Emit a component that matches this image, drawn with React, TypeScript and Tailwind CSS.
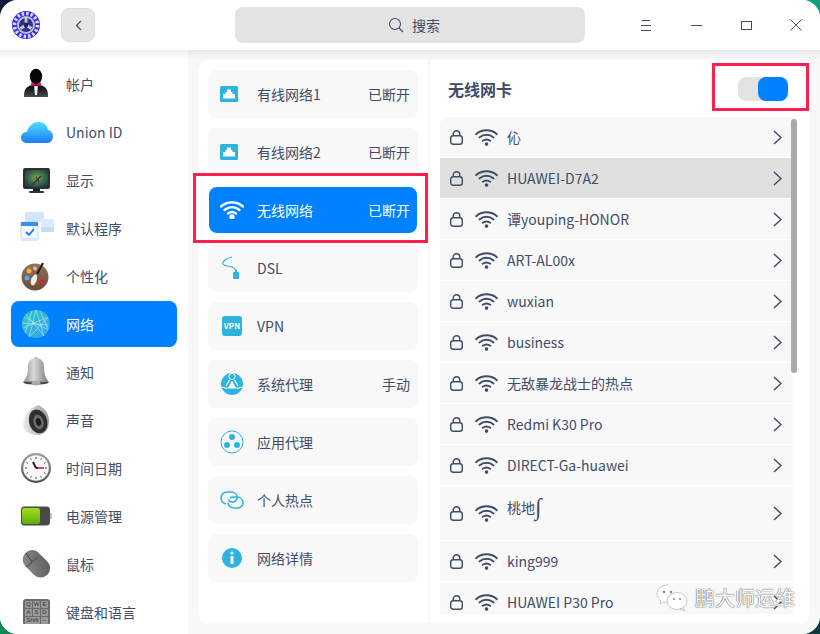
import React from "react";

const Svg = ({ children, w = 32, h = 32, className = "" }: { children: React.ReactNode; w?: number; h?: number; className?: string }) => (
  <svg width={w} height={h} viewBox={`0 0 ${w} ${h}`} fill="none" className={`shrink-0 ${className}`}>
    {children}
  </svg>
);

const Logo = () => (
  <Svg w={30} h={30}>
    <circle cx="15" cy="15" r="14" fill="#3a2be6" />
    <circle cx="15" cy="15" r="11.500" stroke="#dcdcf4" strokeWidth="3.500" strokeDasharray="2.400 2.100" />
    <circle cx="15" cy="15" r="9" fill="#bfc1d2" />
    <circle cx="15" cy="15" r="7" fill="#2c3184" />
    <path d="M15 14V8M15 15l-5.500 3.500M15 15l5.500 3.500" stroke="#c8cad8" strokeWidth="2.800" />
    <circle cx="15" cy="15" r="2.400" fill="#1d2060" />
  </Svg>
);

const Account = () => (
  <Svg>
    <defs>
      <linearGradient id="suit" x1="0" y1="0" x2="0" y2="1">
        <stop offset="0" stopColor="#000" />
        <stop offset="1" stopColor="#4a4a4a" />
      </linearGradient>
    </defs>
    <ellipse cx="16" cy="8.500" rx="6.200" ry="7.800" fill="#060606" />
    <path d="M4 29c0-5 .5-8 3.500-10l5.500-3h6l5.500 3c3 2 3.500 5 3.500 10z" fill="url(#suit)" />
    <path d="M14 18h4l-1 9h-2z" fill="#f0f0f0" />
    <path d="M11 14.500l5 1.800 5-1.800v4l-5-1.500-5 1.500z" fill="#d0145e" />
  </Svg>
);

const Cloud = () => (
  <Svg w={34} h={32}>
    <defs>
      <linearGradient id="cloud" x1="0" y1="0" x2="0" y2="1">
        <stop offset="0" stopColor="#4fdcff" />
        <stop offset="1" stopColor="#1c7cf6" />
      </linearGradient>
    </defs>
    <path d="M7 27c-3.500 0-6-2.500-6-5.500s2.400-5.300 5.500-5.400C8.500 11 12.500 6 18.500 6c5.500 0 8.500 3.500 9.500 8 3.200.6 5 3.500 5 6.500 0 3.800-2.800 6.500-6 6.500z" fill="url(#cloud)" />
  </Svg>
);

const Display = () => (
  <Svg>
    <defs>
      <radialGradient id="scr" cx="0.500" cy="0.450" r="0.700">
        <stop offset="0" stopColor="#7ea52c" />
        <stop offset="0.600" stopColor="#30604f" />
        <stop offset="1" stopColor="#18303a" />
      </radialGradient>
    </defs>
    <rect x="3" y="4" width="27" height="21" rx="2" fill="#2f2f31" />
    <rect x="5" y="6" width="23" height="17" fill="url(#scr)" />
    <path d="M12 21l9-9M16 13l3 5" stroke="#3b2a4a" strokeWidth="1.300" />
    <path d="M13 25h7v2h-7z" fill="#1d1d1d" />
    <rect x="9" y="27" width="15" height="2" rx="1" fill="#333" />
  </Svg>
);

const Apps = () => (
  <Svg w={34} h={32}>
    <rect x="5" y="0" width="19" height="10" rx="2" fill="#d2e5fd" />
    <rect x="21" y="7" width="13" height="13" rx="1.500" fill="#dcebfd" />
    <rect x="21" y="15" width="13" height="5" fill="#c6dcf8" />
    <rect x="1" y="10" width="17" height="17" rx="1.500" fill="#f2f7fe" stroke="#bcd8fb" />
    <rect x="1" y="10" width="17" height="4" fill="#3c8ff0" />
    <path d="M6 20l3 3 5-6" stroke="#1a7cf0" strokeWidth="1.800" />
    <rect x="1" y="27" width="17" height="2" fill="#d9e9fc" />
  </Svg>
);

const Palette = () => (
  <Svg>
    <defs>
      <linearGradient id="pal" x1="0" y1="0" x2="0" y2="1">
        <stop offset="0" stopColor="#91735b" />
        <stop offset="1" stopColor="#6b4c3a" />
      </linearGradient>
    </defs>
    <circle cx="15" cy="17" r="13.500" fill="url(#pal)" />
    <circle cx="9" cy="11" r="2.500" fill="#f2b13a" />
    <circle cx="15" cy="8.500" r="2" fill="#d8b8a8" />
    <circle cx="7" cy="18" r="2.500" fill="#5aa7ea" />
    <circle cx="22" cy="22" r="2.500" fill="#d81f3c" />
    <path d="M11 24c-1-4 1-8 5-10 2 3 1 8-2 11-1 .6-2.500.4-3-1z" fill="#f4efe8" />
    <path d="M17 14l6-11" stroke="#1c1c1c" strokeWidth="2" />
  </Svg>
);

const Globe = () => (
  <Svg>
    <defs>
      <linearGradient id="glb" x1="0" y1="0" x2="1" y2="1">
        <stop offset="0" stopColor="#2dc9c0" />
        <stop offset="1" stopColor="#3a9ff0" />
      </linearGradient>
    </defs>
    <circle cx="16" cy="16" r="14" fill="url(#glb)" />
    <path d="M16 2l-7 27M16 2l8 26M4 9l24 13M3 20L28 9M9 29l19-19M6 6l18 22M2 15l26 2M12 3L5 25M20 3l8 18" stroke="#dff6fb" strokeWidth="0.600" opacity="0.800" />
  </Svg>
);

const Bell = () => (
  <Svg>
    <defs>
      <linearGradient id="bel" x1="0" y1="0" x2="1" y2="0">
        <stop offset="0" stopColor="#8d8d8d" />
        <stop offset="0.400" stopColor="#d9d9d9" />
        <stop offset="1" stopColor="#7c7c7c" />
      </linearGradient>
    </defs>
    <circle cx="16" cy="3" r="1.800" fill="#888" />
    <path d="M16 2c-5.500 0-8 4-8 9 0 6-1 10-4.500 14.500h25C25 21 24 17 24 11c0-5-2.500-9-8-9z" fill="url(#bel)" />
    <path d="M3.500 25.500h25v1.500c-4 2-21 2-25 0z" fill="#4a4a4a" />
    <ellipse cx="16" cy="27" rx="4.500" ry="2.500" fill="#a8a8a8" />
  </Svg>
);

const Speaker = () => (
  <Svg>
    <defs>
      <linearGradient id="spk" x1="0" y1="0" x2="1" y2="0">
        <stop offset="0" stopColor="#ececec" />
        <stop offset="1" stopColor="#9a9a9a" />
      </linearGradient>
    </defs>
    <path d="M3 21C3 13 10 4 18 1c7 3 11 9 11 16 0 8-4 13-10 14-7 0-16-3-16-10z" fill="url(#spk)" />
    <path d="M12 7c5-4 11 0 14 6 3 7 1 15-5 16-6 1-11-4-12-11-.5-4.500 .5-8.500 3-11z" fill="#2f2f2f" />
    <ellipse cx="18.500" cy="18" rx="5" ry="7.500" fill="#6a6a6a" transform="rotate(-15 18.500 18)" />
    <ellipse cx="18.500" cy="18" rx="2.500" ry="4" fill="#1d1d1d" transform="rotate(-15 18.500 18)" />
  </Svg>
);

const Clock = () => (
  <Svg>
    <defs>
      <linearGradient id="clk" x1="0" y1="0" x2="0" y2="1">
        <stop offset="0" stopColor="#a0a0a0" />
        <stop offset="1" stopColor="#505050" />
      </linearGradient>
    </defs>
    <circle cx="16" cy="16" r="15" fill="url(#clk)" />
    <circle cx="16" cy="16" r="12.800" fill="#f7f7f7" />
    <path d="M16 5v2M16 25v2M5 16h2M25 16h2M10.500 6.500l.8 1.400M21.500 6.500l-.8 1.400M10.500 25.500l.8-1.400M21.500 25.500l-.8-1.400M6.500 10.500l1.400.8M6.500 21.500l1.400-.8M25.500 10.500l-1.400.8M25.500 21.500l-1.400-.8" stroke="#444" strokeWidth="1" />
    <path d="M16 16l-3-6" stroke="#222" strokeWidth="2" />
    <path d="M16 16h2" stroke="#222" strokeWidth="2" />
    <path d="M18 16h6" stroke="#f2485a" strokeWidth="2" />
  </Svg>
);

const Battery = () => (
  <Svg>
    <defs>
      <linearGradient id="bat" x1="0" y1="0" x2="0" y2="1">
        <stop offset="0" stopColor="#a5dc20" />
        <stop offset="1" stopColor="#5fae05" />
      </linearGradient>
    </defs>
    <rect x="30" y="13" width="2" height="6" fill="#c4c4c4" />
    <rect x="1" y="6.500" width="29" height="19" rx="3.500" fill="#4a4a4a" />
    <rect x="2" y="8" width="18" height="16" rx="2.500" fill="url(#bat)" />
  </Svg>
);

const Mouse = () => (
  <Svg>
    <defs>
      <linearGradient id="mou" x1="0" y1="0" x2="1" y2="1">
        <stop offset="0" stopColor="#8e8e8e" />
        <stop offset="1" stopColor="#5a5a5a" />
      </linearGradient>
    </defs>
    <rect x="-9.500" y="-15" width="19" height="31" rx="9.500" transform="translate(16 15.500) rotate(-45)" fill="url(#mou)" />
    <path d="M6 19L18 9" stroke="#3e3e3e" strokeWidth="1" />
    <path d="M6 5l6 9" stroke="#3e3e3e" strokeWidth="1" />
  </Svg>
);

const Keyboard = () => {
  const keys = ["Q", "W", "E", "A", "S", "D"];
  return (
    <div className="w-[27px] h-[26px] shrink-0 ml-[3px] rounded-[3px] bg-[#6b6b6b] p-[2px] grid grid-cols-3 gap-px overflow-hidden font-['Liberation_Sans',sans-serif]">
      {keys.map((k) => (
        <div key={k} className="rounded-[1px] bg-[#9a9a9a] text-[6px] leading-[7px] text-center text-[#333]">{k}</div>
      ))}
      <div className="col-span-2 rounded-[1px] bg-[#9a9a9a] text-[6px] leading-[7px] text-center text-[#333]">Shift</div>
      <div className="rounded-[1px] bg-[#9a9a9a] text-[6px] leading-[7px] text-center text-[#333]">–</div>
    </div>
  );
};

const Wired = () => (
  <Svg w={18} h={16}>
    <rect width="18" height="16" rx="1.500" fill="#2cb3de" />
    <path d="M3 12.500V8h2.500V6H7V3.500h4V6h1.500v2H15v4.500z" fill="#fff" />
  </Svg>
);

const WifiIcon = ({ color, w = 24, h = 18, sw = 2, dot = 2 }: { color: string; w?: number; h?: number; sw?: number; dot?: number }) => (
  <svg width={w} height={h} viewBox="0 0 24 18" fill="none" className="shrink-0">
    <path d="M1 5.500c6-5.500 16-5.500 22 0" stroke={color} strokeWidth={sw} strokeLinecap="round" />
    <path d="M4.500 9c4.500-3.800 10.500-3.800 15 0" stroke={color} strokeWidth={sw} strokeLinecap="round" />
    <path d="M8 12.500c2.500-1.800 5.500-1.800 8 0" stroke={color} strokeWidth={sw} strokeLinecap="round" />
    <circle cx="12" cy="16" r={dot} fill={color} />
  </svg>
);

const Dsl = () => (
  <Svg w={24} h={24}>
    <path d="M12 1C7 2 2 5 3 8c1 2 6 2 9 3 3 1 4 2 4 5" stroke="#2cb3de" strokeWidth="1.200" />
    <rect x="13" y="16" width="6" height="7" rx="1" fill="#2cb3de" />
    <rect x="15" y="14" width="2" height="3" fill="#2cb3de" />
  </Svg>
);

const Vpn = () => (
  <div className="w-5 h-5 shrink-0 ml-[2px] rounded-[3px] bg-[#2cb3de] text-white text-[8px] font-bold leading-5 text-center">VPN</div>
);

const Proxy = () => (
  <Svg w={24} h={24}>
    <circle cx="12" cy="12" r="11" fill="#2cb3de" />
    <circle cx="12" cy="4.500" r="3.200" stroke="#fff" strokeWidth="1" />
    <path d="M12 9l4.500 7.500h-9z" fill="#fff" />
    <path d="M7.500 16.500L1.500 15M16.500 16.500l6-1.500" stroke="#fff" strokeWidth="1.200" />
    <path d="M9.500 8L6 14M14.500 8l3.500 6" stroke="#fff" strokeWidth="1.200" />
  </Svg>
);

const AppProxy = () => (
  <Svg w={24} h={24}>
    <circle cx="12" cy="12" r="11" stroke="#2cb3de" strokeWidth="1" />
    <circle cx="12" cy="7" r="3" fill="#2cb3de" />
    <circle cx="7" cy="15" r="3" fill="#2cb3de" />
    <circle cx="17" cy="15" r="3" fill="#2cb3de" />
  </Svg>
);

const Hotspot = () => (
  <Svg w={24} h={18}>
    <path d="M6 13C2 12 1 9 1 7c0-4 3-6 7-6h3c4 0 6 2.500 6 5 0 3-2 5-5 5-2 0-3-1-3-2.500" stroke="#2cb3de" strokeWidth="1.500" />
    <path d="M10 6.500c1-.5 3-.5 5-.5h2c4 0 6 3 6 6s-3 5-6 5h-3c-4 0-6-3-6-5.500" stroke="#2cb3de" strokeWidth="1.500" />
  </Svg>
);

const Info = () => (
  <Svg w={24} h={24}>
    <circle cx="12" cy="12" r="10" fill="#2cb3de" />
    <circle cx="12" cy="7" r="1.600" fill="#fff" />
    <rect x="10.500" y="10" width="3" height="8" fill="#fff" />
  </Svg>
);

const Lock = () => (
  <svg width="13" height="15" viewBox="0 0 13 15" fill="none" className="shrink-0">
    <rect x="0.700" y="5.700" width="11.600" height="8.600" rx="2.500" stroke="#414d68" strokeWidth="1.400" />
    <path d="M3.200 5.500V4a3.300 3.300 0 0 1 6.600 0v1.500" stroke="#414d68" strokeWidth="1.400" />
  </svg>
);

const Chevron = () => (
  <svg width="9" height="15" viewBox="0 0 9 15" fill="none" className="shrink-0">
    <path d="M1 1l7 6.500L1 14" stroke="#414d68" strokeWidth="1.500" />
  </svg>
);

const sideItems: [string, React.ReactNode][] = [
  ["帐户", <Account />],
  ["Union ID", <Cloud />],
  ["显示", <Display />],
  ["默认程序", <Apps />],
  ["个性化", <Palette />],
  ["网络", <Globe />],
  ["通知", <Bell />],
  ["声音", <Speaker />],
  ["时间日期", <Clock />],
  ["电源管理", <Battery />],
  ["鼠标", <Mouse />],
  ["键盘和语言", <Keyboard />],
];

const midItems: [string, React.ReactNode, string][] = [
  ["有线网络1", <Wired />, "已断开"],
  ["有线网络2", <Wired />, "已断开"],
  ["无线网络", <WifiIcon color="#fff" sw={2.400} dot={2.700} />, "已断开"],
  ["DSL", <Dsl />, ""],
  ["VPN", <Vpn />, ""],
  ["系统代理", <Proxy />, "手动"],
  ["应用代理", <AppProxy />, ""],
  ["个人热点", <Hotspot />, ""],
  ["网络详情", <Info />, ""],
];

const wifiRows = [
  "伈",
  "HUAWEI-D7A2",
  "谭youping-HONOR",
  "ART-AL00x",
  "wuxian",
  "business",
  "无敌暴龙战士的热点",
  "Redmi K30 Pro",
  "DIRECT-Ga-huawei",
  "桃地",
  "king999",
  "HUAWEI P30 Pro",
];

export default function App() {
  return (
    <div className="relative w-[820px] h-[634px] overflow-hidden bg-[conic-gradient(#14a07c_0_25%,#0f3b3c_25%_50%,#0d8a54_50%_75%,#0b1b3d_75%_100%)] font-['Noto_Sans_CJK_SC','Noto_Sans',sans-serif] text-[14px] text-[#414d68]">
      <div className="relative h-full flex flex-col rounded-[18px] overflow-hidden bg-white">
        <header className="h-[50px] shrink-0 flex items-center bg-white">
          <div className="ml-[11px] w-[30px] flex"><Logo /></div>
          <button className="ml-5 w-[34px] h-[34px] flex items-center justify-center rounded-lg bg-[#e6e6e6] border border-[#dcdcdc]">
            <svg width="7" height="11" viewBox="0 0 7 11" fill="none"><path d="M6 1L1.500 5.500 6 10" stroke="#414d68" strokeWidth="1.200" /></svg>
          </button>
          <div className="ml-[140px] w-[350px] h-9 flex items-center justify-center gap-2 pl-2 rounded-lg bg-[#e3e3e3]">
            <svg width="16" height="16" viewBox="0 0 16 16" fill="none">
              <circle cx="7" cy="7" r="5.500" stroke="#414d68" strokeWidth="1.100" />
              <path d="M11 11l4 4" stroke="#414d68" strokeWidth="1.200" />
            </svg>
            <span>搜索</span>
          </div>
          <div className="ml-[56px] flex items-center">
            <svg width="10" height="11" viewBox="0 0 10 11" fill="none"><path d="M1 .5h8M0 5.500h10M0 10.500h10" stroke="#414d68" /></svg>
            <svg className="ml-10" width="11" height="1" viewBox="0 0 11 1" fill="none"><path d="M0 .5h11" stroke="#414d68" /></svg>
            <svg className="ml-[39px]" width="11" height="9" viewBox="0 0 11 9" fill="none"><rect x=".5" y=".5" width="10" height="8" stroke="#414d68" /></svg>
            <svg className="ml-[38px]" width="12" height="12" viewBox="0 0 12 12" fill="none"><path d="M.5.500l11 11M11.500.500l-11 11" stroke="#414d68" strokeWidth="0.900" /></svg>
          </div>
        </header>

        <div className="flex-1 min-h-0 flex bg-[#f8f8f8]">
          <aside className="w-[188px] shrink-0 bg-white pt-[11px] px-[11px] pb-[10px] overflow-hidden">
            <div className="h-full overflow-hidden flex flex-col gap-[2px]">
              {sideItems.map(([label, icon]) => {
                const on = label === "网络";
                return (
                  <div key={label} className={`h-[46px] shrink-0 flex items-center rounded-lg pl-[9px] ${on ? "bg-[#0081ff] text-white" : ""}`}>
                    <div className="w-[46px] flex items-center">{icon}</div>
                    <span>{label}</span>
                  </div>
                );
              })}
            </div>
          </aside>

          <section className="ml-[10px] my-[10px] mb-[11px] w-[230px] shrink-0 rounded-l-[10px] bg-white p-[10px] flex flex-col gap-[10px]">
            {midItems.map(([label, icon, state]) => {
              const on = label === "无线网络";
              return (
                <div key={label} className={`shrink-0 flex items-center rounded-lg ${on ? "h-[46px] mx-px my-px bg-[#0081ff] text-white pl-[11px] pr-[7px]" : "h-12 bg-[#f8f8f8] pl-3 pr-2"}`}>
                  <div className="w-[37px] flex items-center">{icon}</div>
                  <span className="flex-1">{label}</span>
                  <span>{state}</span>
                </div>
              );
            })}
          </section>

          <section className="ml-[2px] my-[10px] mb-[11px] w-[380px] shrink-0 rounded-r-[10px] bg-white px-[10px] pb-[9px] flex flex-col relative">
            <div className="h-[57px] shrink-0 flex items-center justify-between pl-2 pr-[12px] pt-px">
              <span className="text-[16px] font-bold">无线网卡</span>
              <div className="flex w-[50px] h-6 rounded-lg bg-[#e3e3e3] justify-end">
                <div className="w-[30px] h-6 rounded-lg bg-[#0081ff]" />
              </div>
            </div>
            <div className="flex-1 min-h-0 overflow-hidden w-[353px] rounded-tl-lg flex flex-col gap-px">
              {wifiRows.map((name) => {
                const tall = name === "桃地";
                return (
                  <div key={name} className={`shrink-0 flex items-center pl-[10px] pr-[11px] ${tall ? "h-[54px]" : "h-10"} ${name === "HUAWEI-D7A2" ? "bg-[#e0e0e0]" : "bg-[#f8f8f8]"}`}>
                    <Lock />
                    <div className="ml-3 mr-[9px]"><WifiIcon color="#414d68" w={23} h={17} sw={2} dot={1.900} /></div>
                    <span className={`flex-1 flex items-center ${tall ? "-mt-[12px]" : ""}`}>
                      {name}
                      {tall && <span className="text-[24px] leading-5 italic font-['Liberation_Serif',serif]">∫</span>}
                    </span>
                    <Chevron />
                  </div>
                );
              })}
            </div>
            <div className="absolute left-[361px] top-[59px] w-[6px] h-[254px] rounded-full bg-[#aaaaaa]" />
          </section>
        </div>
      </div>

      <div className="absolute left-0 right-0 top-[50px] h-[10px] bg-gradient-to-b from-[#00000010] to-transparent" />
      <div className="absolute left-[193px] top-[173px] w-[235px] h-[70px] border-[3px] border-[#ff1f4f]" />
      <div className="absolute left-[712px] top-[63px] w-[97px] h-[48px] border-[3px] border-[#ff1f4f]" />

      <div className="absolute left-[656px] top-[584px] flex items-center gap-[7px]">
        <svg width="32" height="28" viewBox="0 0 32 28" fill="none">
          <path d="M12 1C6 1 1 5 1 10c0 3 1.500 5 4 7l-1 3 4-2c1.300.4 3 .6 4 .6" fill="#fff" stroke="#bbb" strokeWidth="0.800" />
          <ellipse cx="21" cy="17" rx="10" ry="8.500" fill="#fff" stroke="#bbb" strokeWidth="0.800" />
          <path d="M27 24l2 3-5-2z" fill="#fff" stroke="#bbb" strokeWidth="0.800" />
          <circle cx="8" cy="8" r="1.300" fill="#888" />
          <circle cx="15" cy="8" r="1.300" fill="#888" />
          <circle cx="18" cy="15" r="1" fill="#888" />
          <circle cx="24" cy="15" r="1" fill="#888" />
        </svg>
        <span className="text-[20px] leading-7 text-white [text-shadow:0_0_1px_#555,0_0_1px_#555]">鹏大师运维</span>
      </div>
    </div>
  );
}
